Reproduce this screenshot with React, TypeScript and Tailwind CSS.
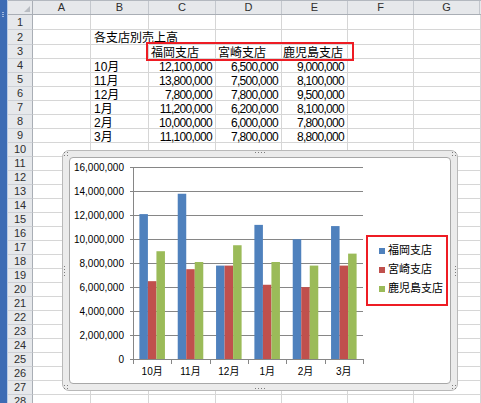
import React from 'react';

const FONT = { fontFamily: '"Liberation Sans", "Noto Sans CJK JP", sans-serif' };

const months = ['10月', '11月', '12月', '1月', '2月', '3月'];
const series = [
  { name: '福岡支店', color: '#4f81bd', values: [12.1, 13.8, 7.8, 11.2, 10.0, 11.1] },
  { name: '宮崎支店', color: '#c0504d', values: [6.5, 7.5, 7.8, 6.2, 6.0, 7.8] },
  { name: '鹿児島支店', color: '#9bbb59', values: [9.0, 8.1, 9.5, 8.1, 7.8, 8.8] },
];

const fmt = (v: number) => Math.round(v * 1000000).toLocaleString('en-US');

type Row = { n: number; h: string; b?: string; c?: string; d?: string; e?: string; head?: boolean; title?: boolean };

const rows: Row[] = [
  { n: 1, h: 'h-[15px]' },
  { n: 2, h: 'h-[15px]', b: '各支店別売上高', title: true },
  { n: 3, h: 'h-[14px]', c: '福岡支店', d: '宮崎支店', e: '鹿児島支店', head: true },
  ...months.map((m, i) => ({
    n: 4 + i,
    h: 'h-[14px]',
    b: m,
    c: fmt(series[0].values[i]),
    d: fmt(series[1].values[i]),
    e: fmt(series[2].values[i]),
  })),
  ...Array.from({ length: 19 }, (_, i) => ({ n: 10 + i, h: 'h-[14px]' })),
];

function Dots({ cols, rows: r }: { cols: number; rows: number }) {
  return (
    <div className="flex flex-col gap-[2px]">
      {Array.from({ length: r }).map((_, i) => (
        <div key={i} className="flex gap-[2px]">
          {Array.from({ length: cols }).map((_, j) => (
            <span key={j} className="block w-[1px] h-[1px] bg-[#7b7b7b]" />
          ))}
        </div>
      ))}
    </div>
  );
}

function Plot() {
  const X0 = 63;
  const Y0 = 201;
  const catW = 230 / 6;
  const unit = 191.6 / 16;
  const bw = catW / 4.5;
  const gap = (catW - bw * 3) / 2;
  const gy = (k: number) => Y0 - Math.round(k * 23.95) + 0.5;

  return (
    <svg width={296} height={226} className="shrink-0" style={FONT}>
      {[1, 2, 3, 4, 5, 6, 7, 8].map((k) => (
        <line key={k} x1={60} x2={293} y1={gy(k)} y2={gy(k)} stroke="#868686" strokeWidth={1} />
      ))}
      {[0, 1, 2, 3, 4, 5, 6, 7, 8].map((k) => (
        <text key={k} x={54} y={gy(k) + 3.5} fontSize={10} textAnchor="end" fill="#000">
          {k === 0 ? '0' : (k * 2000000).toLocaleString('en-US')}
        </text>
      ))}
      {series.map((s, si) =>
        s.values.map((v, i) => {
          const h = v * unit;
          return (
            <rect
              key={`${si}-${i}`}
              x={X0 + i * catW + gap + si * bw}
              y={Y0 - h}
              width={bw}
              height={h}
              fill={s.color}
            />
          );
        })
      )}
      <line x1={60} x2={293} y1={Y0 + 0.5} y2={Y0 + 0.5} stroke="#868686" strokeWidth={1} />
      <line x1={X0 + 0.5} x2={X0 + 0.5} y1={9} y2={Y0 + 1} stroke="#868686" strokeWidth={1} />
      {[0, 1, 2, 3, 4, 5, 6].map((k) => {
        const x = X0 + Math.round(k * catW) + 0.5;
        return <line key={k} x1={x} x2={x} y1={Y0} y2={Y0 + 5} stroke="#868686" strokeWidth={1} />;
      })}
      {months.map((m, i) => (
        <text key={m} x={X0 + (i + 0.5) * catW} y={217} fontSize={10} textAnchor="middle" fill="#000">
          {m}
        </text>
      ))}
    </svg>
  );
}

function Chart() {
  return (
    <div className="absolute left-[62px] top-[150px] w-[396px] h-[241px] rounded-[7px] border border-[#b9b9b9] bg-[#ebebeb] p-[6px]">
      <div className="flex items-center h-full w-full rounded-[4px] border border-[#a8a8a8] bg-white">
        <Plot />
        <div className="w-[82px] h-[71px] border-2 border-[#ee1c24] pt-[4px] pl-[11px]" style={FONT}>
          {series.map((s) => (
            <div key={s.name} className="flex items-center h-[19px] text-[11px] text-black">
              <span className="block w-[6px] h-[6px] mr-[3px]" style={{ background: s.color }} />
              {s.name}
            </div>
          ))}
        </div>
      </div>
      <div className="absolute left-[1px] top-[1px]"><Dots cols={2} rows={2} /></div>
      <div className="absolute right-[1px] top-[1px]"><Dots cols={2} rows={2} /></div>
      <div className="absolute left-[1px] bottom-[1px]"><Dots cols={2} rows={2} /></div>
      <div className="absolute right-[1px] bottom-[1px]"><Dots cols={2} rows={2} /></div>
      <div className="absolute left-1/2 -translate-x-1/2 top-[1px]"><Dots cols={4} rows={1} /></div>
      <div className="absolute left-1/2 -translate-x-1/2 bottom-[1px]"><Dots cols={4} rows={1} /></div>
      <div className="absolute left-[1px] top-1/2 -translate-y-1/2"><Dots cols={1} rows={4} /></div>
      <div className="absolute right-[1px] top-1/2 -translate-y-1/2"><Dots cols={1} rows={4} /></div>
    </div>
  );
}

const cell = 'shrink-0 border-r border-b border-[#d6d6d6] overflow-visible whitespace-nowrap';
const num = 'text-right pr-[3px] text-[11.5px] tracking-[-0.7px]';

export default function App() {
  return (
    <div className="relative w-[481px] h-[403px] overflow-hidden bg-white flex text-black" style={FONT}>
      <div className="w-[8px] h-full shrink-0 bg-[#3d6cb4] border-r border-[#b8cbe6]">
        <div className="mt-[12px] ml-[2px] flex flex-col gap-[1px]">
          {[0, 1, 2].map((i) => (
            <span key={i} className="block w-[2px] h-[1px] bg-[#9fb8dd]" />
          ))}
        </div>
      </div>
      <div className="flex-1 flex flex-col min-w-0">
        <div className="h-[3px] bg-[#dde1e6] border-b border-[#b3b8bf]" />
        <div className="flex h-[14px] bg-[#e6e8eb] border-b border-[#a9aeb5] text-[11px] text-[#2f2f2f] leading-[13px]">
          <div className="relative w-[25px] shrink-0 border-r border-[#a9aeb5]">
            <svg className="absolute right-[2px] bottom-[2px]" width="6" height="6">
              <polygon points="6,0 6,6 0,6" fill="#b8bcc2" />
            </svg>
          </div>
          {['A', 'B', 'C', 'D', 'E', 'F', 'G'].map((l, i) => (
            <div
              key={l}
              className={`shrink-0 flex items-center justify-center border-r border-[#c3c7cd] ${
                i < 2 ? 'w-[58px]' : i === 2 ? 'w-[67px]' : 'w-[66px]'
              }`}
            >
              {l}
            </div>
          ))}
        </div>
        {rows.map((r) => (
          <div key={r.n} className={`flex shrink-0 ${r.h}`}>
            <div className="w-[25px] shrink-0 flex items-center justify-center bg-[#e6e8eb] border-r border-b border-r-[#a9aeb5] border-b-[#cdd0d5] text-[11px] text-[#2f2f2f]">
              {r.n}
            </div>
            <div className={`${cell} w-[58px]`} />
            <div
              className={`${cell} w-[58px] pl-[3px] pt-[1px] text-[12px] leading-[14px] ${r.title ? 'border-r-transparent' : ''}`}
            >
              {r.b}
            </div>
            <div className={`${cell} w-[67px] text-[12px] leading-[14px] pt-[1px] ${r.head ? 'pl-[2px]' : num}`}>
              {r.c}
            </div>
            <div className={`${cell} w-[66px] text-[12px] leading-[14px] pt-[1px] ${r.head ? 'pl-[2px]' : num}`}>
              {r.d}
            </div>
            <div className={`${cell} w-[66px] text-[12px] leading-[14px] pt-[1px] ${r.head ? 'pl-[1px]' : num}`}>
              {r.e}
            </div>
            <div className={`${cell} w-[66px]`} />
            <div className={`${cell} flex-1`} />
          </div>
        ))}
      </div>
      <div className="absolute left-[146px] top-[42px] w-[208px] h-[19px] border-2 border-[#ee1c24]" />
      <Chart />
    </div>
  );
}
